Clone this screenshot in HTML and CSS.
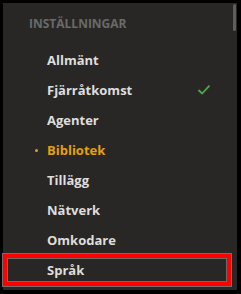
FILE: index.html
```html
<!DOCTYPE html>
<html lang="sv">
<head>
    <meta charset="UTF-8">
    <meta name="viewport" content="width=device-width, initial-scale=1.0">
    <title>Inställningar</title>
    <link rel="stylesheet" href="styles.css">
</head>
<body>
    <div class="panel">
        <div class="scrollbar"></div>
        <h2 class="heading">Inställningar</h2>
        <ul class="menu">
            <li class="item">Allmänt</li>
            <li class="item">Fjärråtkomst
                <svg class="check" width="12" height="10" viewBox="0 0 12 10">
                    <path d="M1 5.5 L4.2 8.5 L11 1.2" fill="none" stroke="#4fa84a" stroke-width="1.8" stroke-linecap="round" stroke-linejoin="round"/>
                </svg>
            </li>
            <li class="item">Agenter</li>
            <li class="item active">Bibliotek</li>
            <li class="item">Tillägg</li>
            <li class="item">Nätverk</li>
            <li class="item">Omkodare</li>
            <li class="item marked">Språk</li>
        </ul>
    </div>
</body>
</html>
```

FILE: styles.css
```css
html, body {
    margin: 0;
    height: 100%;
    background: #000;
}
body {
    padding: 3px 4px 4px 3px;
    box-sizing: border-box;
    font-family: "Open Sans", sans-serif;
}
.panel {
    position: relative;
    height: 287px;
    background: #292725;
}
.scrollbar {
    position: absolute;
    top: 1px;
    right: 1px;
    width: 3px;
    height: 27px;
    border-radius: 2px;
    background: #5e5e5e;
}
.heading {
    margin: 0;
    padding: 12px 0 0 26px;
    font-size: 12px;
    font-weight: 700;
    line-height: 17px;
    text-transform: uppercase;
    color: #6a6a6a;
}
.menu {
    list-style: none;
    margin: 0;
    padding: 13px 0 0;
}
.item {
    position: relative;
    display: flex;
    align-items: center;
    height: 30px;
    padding-left: 44px;
    font-size: 13px;
    font-weight: 700;
    color: #dedede;
}
.check {
    position: absolute;
    left: 195px;
    top: 10px;
}
.active {
    color: #e5a00d;
}
.active::before {
    content: "";
    position: absolute;
    left: 32px;
    top: 14px;
    width: 3px;
    height: 3px;
    border-radius: 50%;
    background: #e5a00d;
}
.marked::after {
    content: "";
    position: absolute;
    left: 0;
    top: -1px;
    width: 228px;
    height: 32px;
    box-sizing: border-box;
    border: 4px solid #ff0000;
    box-shadow: 0 0 0 1px #7a6a6a, inset 0 0 0 1px #6e6a68;
}
```
